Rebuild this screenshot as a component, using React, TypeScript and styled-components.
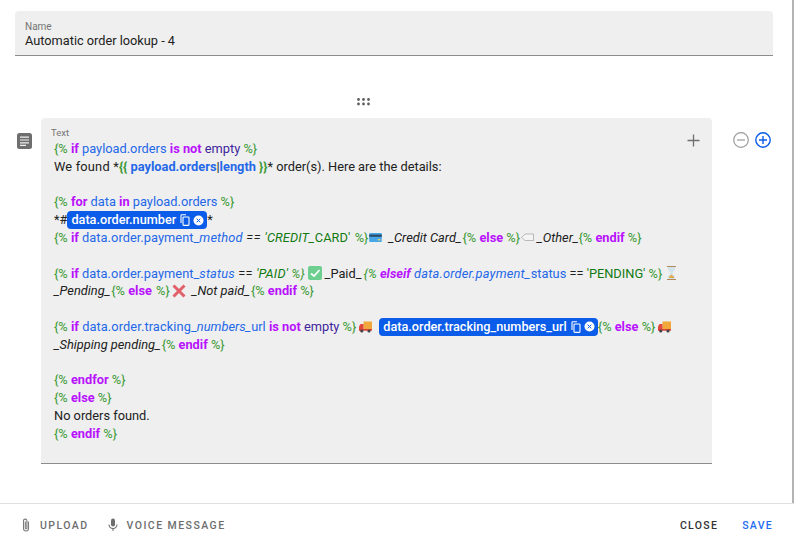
import React from 'react';
import styled, { createGlobalStyle, css } from 'styled-components';

const GlobalStyle = createGlobalStyle`
  html, body {
    margin: 0;
    padding: 0;
    background: #fff;
    font-family: Roboto, "Liberation Sans", sans-serif;
  }
`;

type TokenProps = { $i?: boolean; $b?: boolean; $ml?: number; $ls?: number };

const token = css<TokenProps>`
  font-style: ${(p) => (p.$i ? 'italic' : 'normal')};
  margin-left: ${(p) => p.$ml ?? 0}px;
  letter-spacing: ${(p) => p.$ls ?? 0}px;
`;

const Page = styled.div`
  width: 794px;
  height: 542px;
  display: flex;
  flex-direction: column;
  overflow: hidden;
`;

const Main = styled.main`
  height: 503px;
  box-sizing: border-box;
  padding: 11px 19px 0 15px;
  border-right: 2px solid #b4b4b4;
`;

const NameField = styled.div`
  height: 45px;
  box-sizing: border-box;
  padding: 10px 10px 0;
  background: #efefef;
  border-bottom: 1px solid #8c8c8c;
  border-radius: 4px 4px 0 0;
`;

const FieldLabel = styled.div`
  font-size: 10px;
  line-height: 12px;
  color: #757575;
`;

const NameValue = styled.div`
  font-size: 12.75px;
  line-height: 16px;
  color: #212121;
`;

const DragRow = styled.div`
  display: flex;
  height: 62px;
  align-items: flex-end;
  box-sizing: border-box;
  padding: 0 0 12px 342px;
`;

const MessageRow = styled.div`
  display: flex;
  align-items: flex-start;
  margin-left: 2px;
`;

const TypeIcon = styled.div`
  width: 24px;
  padding-top: 15px;
  display: flex;
`;

const Editor = styled.div`
  position: relative;
  width: 671px;
  height: 346px;
  box-sizing: border-box;
  padding: 10px 10px 0 13px;
  background: #efefef;
  border-bottom: 1px solid #8c8c8c;
  border-radius: 4px 4px 0 0;
`;

const EditorLabel = styled(FieldLabel)`
  margin-left: -3px;
  font-size: 9.5px;
  line-height: 10px;
`;

const AddButton = styled.div`
  position: absolute;
  top: 16px;
  right: 12px;
  display: flex;
`;

const Code = styled.div`
  font-size: 12.8px;
  line-height: 17.8px;
  color: #212121;
  margin-top: 2px;
`;

const Line = styled.div`
  height: 17.8px;
  white-space: pre;
  display: flex;
  align-items: center;
`;

const Text = styled.span<TokenProps>`
  ${token}
`;

const Tag = styled.span<TokenProps>`
  ${token}
  color: #3b9a35;
  font-weight: ${(p) => (p.$b ? 700 : 400)};
`;

const Kw = styled.span<TokenProps>`
  ${token}
  color: #b812ff;
  font-weight: 700;
`;

const Var = styled.span<TokenProps>`
  ${token}
  color: #2468e8;
  font-weight: ${(p) => (p.$b ? 700 : 400)};
`;

const Empty = styled.span`
  color: #40259c;
`;

const Str = styled.span<TokenProps>`
  ${token}
  color: #117a11;
`;

const Chip = styled.span<{ $ml?: number }>`
  display: inline-flex;
  align-items: center;
  height: 18px;
  padding: 0 3px 0 4px;
  margin-left: ${(p) => p.$ml ?? 0}px;
  border-radius: 4px;
  background: #0b5ce8;
  color: #fff;
  font-size: 12.7px;
  font-weight: 500;
  gap: 4px;
`;

const ChipIcons = styled.span`
  display: inline-flex;
  align-items: center;
  gap: 3px;
`;

const Emoji = styled.svg<{ $ml?: number; $mr?: number }>`
  flex: none;
  margin-left: ${(p) => p.$ml ?? 0}px;
  margin-right: ${(p) => p.$mr ?? 0}px;
`;

const SideButtons = styled.div`
  display: flex;
  gap: 6px;
  margin-left: 21px;
  padding-top: 14px;
`;

const Footer = styled.footer`
  flex: 1;
  display: flex;
  align-items: center;
  justify-content: space-between;
  border-top: 1px solid #e0e0e0;
  padding: 4px 21px 0 20px;
`;

const FooterGroup = styled.div<{ $gap: number }>`
  display: flex;
  align-items: center;
  gap: ${(p) => p.$gap}px;
`;

const FooterButton = styled.button<{ $tone: 'muted' | 'dark' | 'primary' }>`
  display: flex;
  align-items: center;
  gap: 8px;
  padding: 0;
  border: 0;
  background: none;
  font-family: inherit;
  font-size: 10.5px;
  font-weight: 500;
  letter-spacing: ${(p) => (p.$tone === 'muted' ? 1.45 : 1.3)}px;
  color: ${(p) => (p.$tone === 'muted' ? '#6d6d6d' : p.$tone === 'dark' ? '#333' : '#1f6cf0')};
`;

const CopyIcon = () => (
  <svg width="10" height="12" viewBox="0 0 10 12" fill="none" stroke="#fff" strokeWidth="1.1">
    <path d="M1 9V1.5C1 1 1.3.7 1.8.7H6" />
    <rect x="3" y="3" width="6" height="8.4" rx=".8" />
  </svg>
);

const ClearIcon = () => (
  <svg width="11" height="11" viewBox="0 0 11 11">
    <circle cx="5.5" cy="5.5" r="5" fill="#fff" />
    <path d="M3.7 3.7l3.6 3.6M7.3 3.7l-3.6 3.6" stroke="#0b5ce8" strokeWidth="1" />
  </svg>
);

const DragIcon = () => (
  <svg width="14" height="8" viewBox="0 0 14 8" fill="#5f5f5f">
    {[1.5, 6.5, 11.5].map((x) =>
      [1.5, 6].map((y) => <circle key={`${x}-${y}`} cx={x} cy={y} r="1.4" />),
    )}
  </svg>
);

const NotesIcon = () => (
  <svg width="15" height="16" viewBox="0 0 15 16">
    <rect width="15" height="16" rx="2.5" fill="#6e6e6e" />
    <path d="M3 4.2h9M3 7h9M3 9.8h9M3 12.4h6" stroke="#f0f0f0" strokeWidth="1.2" />
  </svg>
);

const CardEmoji = () => (
  <Emoji width="13" height="9" viewBox="0 0 14 10" $ml={1} $mr={6}>
    <rect width="14" height="10" rx="1" fill="#47a6e6" />
    <rect y="1.8" width="14" height="2.4" fill="#2b4a63" />
    <rect x="9.5" y="6.8" width="3" height="1.4" fill="#f2d36b" />
  </Emoji>
);

const LabelEmoji = () => (
  <Emoji width="13" height="9" viewBox="0 0 13 9" fill="#f4f4f4" stroke="#a9a9a9" strokeWidth=".8" $ml={1} $mr={3}>
    <path d="M4 1h8.500v6.500H4L.7 4.500z" />
  </Emoji>
);

const CheckEmoji = () => (
  <Emoji width="14" height="14" viewBox="0 0 14 14" $ml={3} $mr={3}>
    <rect width="14" height="14" rx="2" fill="#6ccf90" />
    <path d="M3 7.500l3 2.500 5.500-6" fill="none" stroke="#fff" strokeWidth="1.700" />
  </Emoji>
);

const CrossEmoji = () => (
  <Emoji width="14" height="14" viewBox="0 0 14 14" $ml={2} $mr={6}>
    <path d="M1.500 1.500l11 11M12.500 1.500l-11 11" stroke="#e2606a" strokeWidth="3" />
  </Emoji>
);

const HourglassEmoji = () => (
  <Emoji width="11" height="14" viewBox="0 0 11 14" $ml={4}>
    <path d="M2 1h7v2.500L6.200 7 9 10.500V13H2v-2.500L4.800 7 2 3.500z" fill="#d3e3ea" />
    <path d="M3 11l2.500-2.500L8 11v1H3z" fill="#e0a94a" />
    <path d="M1 .5h9M1 13.500h9" stroke="#b08a5b" strokeWidth="1.200" />
  </Emoji>
);

const TruckEmoji = ({ ml = 3, mr = 0 }: { ml?: number; mr?: number }) => (
  <Emoji width="13" height="12" viewBox="0 0 13 12" $ml={ml} $mr={mr}>
    <rect x="4.500" y="0.500" width="8.500" height="7.500" fill="#f2a93b" />
    <path d="M0 9.500V5.500L1.500 3h3v6.500z" fill="#e0483e" />
    <rect y="8" width="13" height="1.700" fill="#d8433a" />
    <circle cx="2.800" cy="10" r="1.600" fill="#444" />
    <circle cx="10" cy="10" r="1.600" fill="#444" />
  </Emoji>
);

const App = () => (
  <Page>
    <GlobalStyle />
    <Main>
      <NameField>
        <FieldLabel>Name</FieldLabel>
        <NameValue>Automatic order lookup - 4</NameValue>
      </NameField>
      <DragRow>
        <DragIcon />
      </DragRow>
      <MessageRow>
        <TypeIcon>
          <NotesIcon />
        </TypeIcon>
        <Editor>
          <EditorLabel>Text</EditorLabel>
          <AddButton>
            <svg width="13" height="13" viewBox="0 0 13 13" stroke="#6f6f6f" strokeWidth="1.300">
              <path d="M6.500 0.500v12M0.500 6.500h12" />
            </svg>
          </AddButton>
          <Code>
            <Line>
              <Tag>{'{% '}</Tag><Kw>if</Kw><Var> payload.orders </Var><Kw>is not</Kw><Empty> empty </Empty><Tag>{'%}'}</Tag>
            </Line>
            <Line>
              <Text $ls={0.2}>We found *</Text><Tag $b>{'{{'}</Tag><Var $b>{' payload.orders'}</Var><Text>|</Text><Var $b>length</Var><Tag $b>{' }}'}</Tag><Text>* order(s). Here are the details:</Text>
            </Line>
            <Line />
            <Line>
              <Tag>{'{% '}</Tag><Kw>for</Kw><Var> data </Var><Kw>in</Kw><Var> payload.orders </Var><Tag>{'%}'}</Tag>
            </Line>
            <Line>
              <Text>*#</Text>
              <Chip>
                data.order.number
                <ChipIcons><CopyIcon /><ClearIcon /></ChipIcons>
              </Chip>
              <Text>*</Text>
            </Line>
            <Line>
              <Tag>{'{% '}</Tag><Kw>if</Kw><Var $ls={0.05}> data.order.payment_</Var><Var $i $ls={0.15}>method</Var><Text $i $ls={0.5}> == </Text><Str $i $ls={0.1}>'CREDIT_</Str><Str $ls={0.1}>CARD' </Str><Tag $ml={1}>{'%}'}</Tag>
              <CardEmoji />
              <Text $i>_Credit Card_</Text><Tag $ml={1}>{'{% '}</Tag><Kw>else</Kw><Tag>{' %}'}</Tag>
              <LabelEmoji />
              <Text $i>_Other_</Text><Tag>{'{% '}</Tag><Kw>endif</Kw><Tag>{' %}'}</Tag>
            </Line>
            <Line />
            <Line>
              <Tag>{'{% '}</Tag><Kw>if</Kw><Var $ls={0.05}> data.order.payment_</Var><Var $i $ls={0.15}>status</Var><Text $ls={0.25}> == </Text><Str $i $ls={0.15}>'PAID' </Str><Tag $i>{'%}'}</Tag>
              <CheckEmoji />
              <Text>_Paid_</Text><Tag $i $ml={2}>{'{% '}</Tag><Kw $i>elseif</Kw><Var $i $ls={0.2}> data.order.payment_</Var><Var>status</Var><Text> == </Text><Str>'PENDING' </Str><Tag>{'%}'}</Tag>
              <HourglassEmoji />
            </Line>
            <Line>
              <Text $i>_Pending_</Text><Tag $ml={1}>{'{% '}</Tag><Kw>else</Kw><Tag $ml={1}>{' %}'}</Tag>
              <CrossEmoji />
              <Text $i>_Not paid_</Text><Tag $ml={1}>{'{% '}</Tag><Kw>endif</Kw><Tag>{' %}'}</Tag>
            </Line>
            <Line />
            <Line>
              <Tag>{'{% '}</Tag><Kw>if</Kw><Var $ls={0.1}> data.order.tracking_</Var><Var $i>numbers_</Var><Var>url </Var><Kw>is not</Kw><Empty> empty </Empty><Tag>{'%}'}</Tag>
              <TruckEmoji />
              <Chip $ml={7}>
                data.order.tracking_numbers_url
                <ChipIcons><CopyIcon /><ClearIcon /></ChipIcons>
              </Chip>
              <Tag>{'{% '}</Tag><Kw>else</Kw><Tag>{' %}'}</Tag>
              <TruckEmoji />
            </Line>
            <Line>
              <Text $i>_Shipping pending_</Text><Tag $ml={1}>{'{% '}</Tag><Kw>endif</Kw><Tag>{' %}'}</Tag>
            </Line>
            <Line />
            <Line>
              <Tag>{'{% '}</Tag><Kw>endfor</Kw><Tag>{' %}'}</Tag>
            </Line>
            <Line>
              <Tag>{'{% '}</Tag><Kw>else</Kw><Tag>{' %}'}</Tag>
            </Line>
            <Line>
              <Text>No orders found.</Text>
            </Line>
            <Line>
              <Tag>{'{% '}</Tag><Kw>endif</Kw><Tag>{' %}'}</Tag>
            </Line>
          </Code>
        </Editor>
        <SideButtons>
          <svg width="16" height="16" viewBox="0 0 16 16" fill="none" stroke="#9a9a9a" strokeWidth="1.200">
            <circle cx="8" cy="8" r="7.300" />
            <path d="M4 8h8" />
          </svg>
          <svg width="16" height="16" viewBox="0 0 16 16" fill="none" stroke="#0b5ce8" strokeWidth="1.400">
            <circle cx="8" cy="8" r="7.200" />
            <path d="M4 8h8M8 4v8" />
          </svg>
        </SideButtons>
      </MessageRow>
    </Main>
    <Footer>
      <FooterGroup $gap={18}>
        <FooterButton $tone="muted">
          <svg width="12" height="14" viewBox="0 0 12 14" fill="none" stroke="#7a7a7a" strokeWidth="1.100">
            <path d="M8.500 3.500v7a2.500 2.500 0 0 1-5 0V2.800a1.700 1.700 0 0 1 3.400 0V10a.8.800 0 0 1-1.600 0V3.500" />
          </svg>
          UPLOAD
        </FooterButton>
        <FooterButton $tone="muted">
          <svg width="12" height="14" viewBox="0 0 12 14" fill="#6d6d6d">
            <rect x="4" y="0.500" width="4" height="8" rx="2" />
            <path d="M2 6.500a4 4 0 0 0 8 0" fill="none" stroke="#6d6d6d" strokeWidth="1.100" />
            <rect x="5.500" y="10" width="1" height="3" />
          </svg>
          VOICE MESSAGE
        </FooterButton>
      </FooterGroup>
      <FooterGroup $gap={24}>
        <FooterButton $tone="dark">CLOSE</FooterButton>
        <FooterButton $tone="primary">SAVE</FooterButton>
      </FooterGroup>
    </Footer>
  </Page>
);

export default App;
